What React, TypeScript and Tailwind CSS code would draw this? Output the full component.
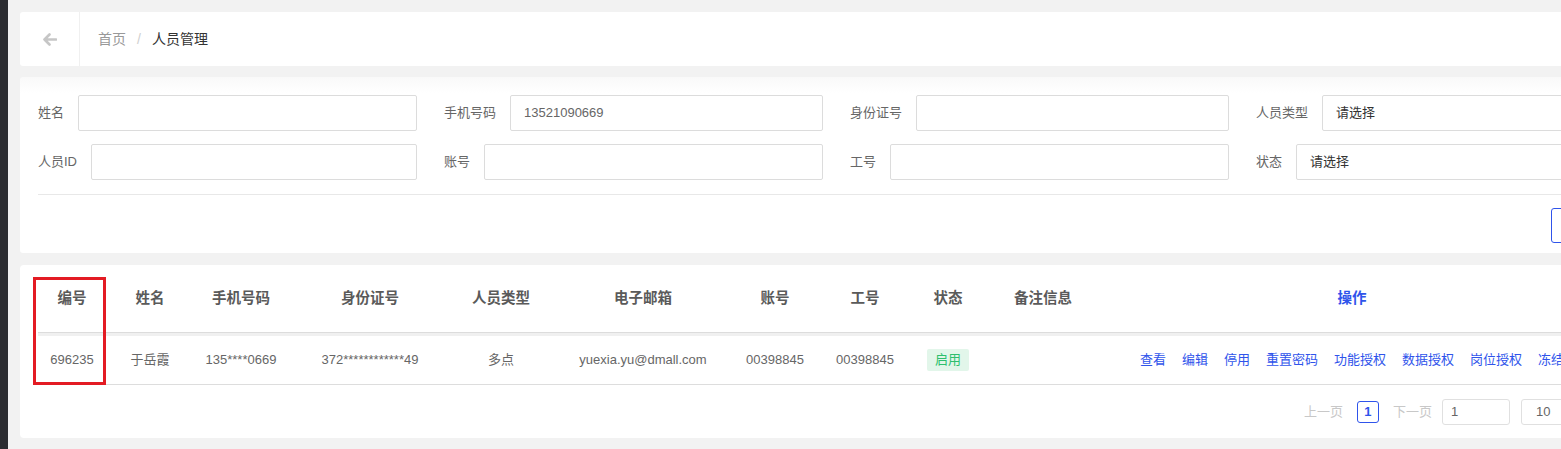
import React from "react";

const cols = "grid-cols-[68px_88px_94px_164px_98px_186px_78px_102px_64px_126px_492px]";

const headers = ["编号", "姓名", "手机号码", "身份证号", "人员类型", "电子邮箱", "账号", "工号", "状态", "备注信息"];

const actions = ["查看", "编辑", "停用", "重置密码", "功能授权", "数据授权", "岗位授权", "冻结"];

function Field({ label, value, dark }: { label: string; value?: string; dark?: boolean }) {
  return (
    <div className="flex w-[379px] shrink-0 items-center">
      <span className="mr-[14px] whitespace-nowrap text-[13px] text-[#666]">{label}</span>
      <div
        className={`flex h-[36px] flex-1 items-center rounded-[2px] border border-[#dcdcdc] px-[13px] text-[13px] ${
          dark ? "text-[#333]" : "text-[#666]"
        }`}
      >
        {value}
      </div>
    </div>
  );
}

export default function App() {
  return (
    <div className="flex h-[449px] w-full overflow-hidden bg-[#f2f2f2] font-['Liberation_Sans','Noto_Sans_CJK_SC',sans-serif]">
      <div className="w-[8px] shrink-0 bg-[#2c2d31]" />
      <div className="flex w-[1700px] shrink-0 flex-col pl-[12px] pt-[12px]">
        {/* breadcrumb */}
        <div className="flex h-[54px] items-center rounded-[3px] bg-white">
          <div className="flex h-full w-[60px] items-center justify-center border-r border-[#f0f0f0]">
            <svg width="15" height="13" viewBox="0 0 15 13" fill="none">
              <path d="M14 6.5H2.5M7.5 1.5L2.5 6.5L7.5 11.5" stroke="#c6c6c6" strokeWidth="2.6" strokeLinecap="round" strokeLinejoin="round" />
            </svg>
          </div>
          <div className="flex items-center pl-[18px] text-[14px]">
            <span className="text-[#999]">首页</span>
            <span className="mx-[11px] text-[#d0d0d0]">/</span>
            <span className="text-[#333]">人员管理</span>
          </div>
        </div>

        {/* filters */}
        <div className="mt-[11px] h-[176px] rounded-[3px] bg-[linear-gradient(#f9f9f9,#ffffff_16px)] px-[18px] pt-[18px]">
          <div className="flex gap-[27px]">
            <Field label="姓名" />
            <Field label="手机号码" value="13521090669" />
            <Field label="身份证号" />
            <Field label="人员类型" value="请选择" dark />
          </div>
          <div className="mt-[13px] flex gap-[27px]">
            <Field label="人员ID" />
            <Field label="账号" />
            <Field label="工号" />
            <Field label="状态" value="请选择" dark />
          </div>
          <div className="mt-[14px] border-t border-[#e8e8e8]" />
          <div className="mt-[13px] flex justify-end gap-[10px]">
            <button className="h-[35px] w-[64px] rounded-[3px] border border-[#2f54eb] bg-white text-[13px] text-[#2f54eb]">
              查询
            </button>
            <button className="h-[35px] w-[65px] rounded-[3px] border border-[#dcdcdc] bg-white text-[13px] text-[#666]">
              重置
            </button>
          </div>
        </div>

        {/* table */}
        <div className="relative mt-[12px] h-[173px] rounded-[4px] bg-white px-[18px]">
          <div className="w-[1560px]">
            <div className={`grid h-[68px] ${cols} border-b border-[#dcdcdc]`}>
              {headers.map((h) => (
                <div key={h} className="pt-[23px] text-center text-[14.5px] font-bold leading-[20px] text-[#5a5a5a]">
                  {h}
                </div>
              ))}
              <div className="pt-[23px] text-center text-[14.5px] font-bold leading-[20px] text-[#2f54eb]">操作</div>
            </div>
            <div className="h-[3px] bg-[#f0f0f0]" />
            <div className={`grid h-[49px] ${cols} items-center border-b border-[#dddddd] text-center text-[13px] text-[#666]`}>
              <div>696235</div>
              <div>于岳霞</div>
              <div>135****0669</div>
              <div>372************49</div>
              <div>多点</div>
              <div>yuexia.yu@dmall.com</div>
              <div>00398845</div>
              <div>00398845</div>
              <div className="flex justify-center">
                <span className="flex h-[22px] items-center rounded-[2px] bg-[#e2f6ea] px-[8px] text-[#2fbf6e]">启用</span>
              </div>
              <div />
              <div className="flex justify-center gap-[16px] whitespace-nowrap text-[#2f54eb]">
                {actions.map((a) => (
                  <span key={a}>{a}</span>
                ))}
              </div>
            </div>
            <div className="flex items-center justify-end pt-[14px] text-[13px]">
              <span className="text-[#c8c8c8]">上一页</span>
              <span className="ml-[14px] flex h-[22px] w-[22px] items-center justify-center rounded-[3px] border border-[#2f54eb] font-bold text-[#2f54eb]">
                1
              </span>
              <span className="ml-[14px] text-[#c8c8c8]">下一页</span>
              <div className="ml-[10px] flex h-[26px] w-[68px] items-center rounded-[3px] border border-[#e0e0e0] px-[8px] text-[#666]">
                1
              </div>
              <div className="ml-[11px] flex h-[26px] w-[77px] items-center rounded-[3px] border border-[#e0e0e0] px-[14px] text-[#666]">
                10
              </div>
            </div>
          </div>
          {/* annotation box */}
          <div className="absolute left-[13px] top-[12px] h-[108px] w-[73px] border-[3px] border-[#e31b23]" />
        </div>
      </div>
    </div>
  );
}
